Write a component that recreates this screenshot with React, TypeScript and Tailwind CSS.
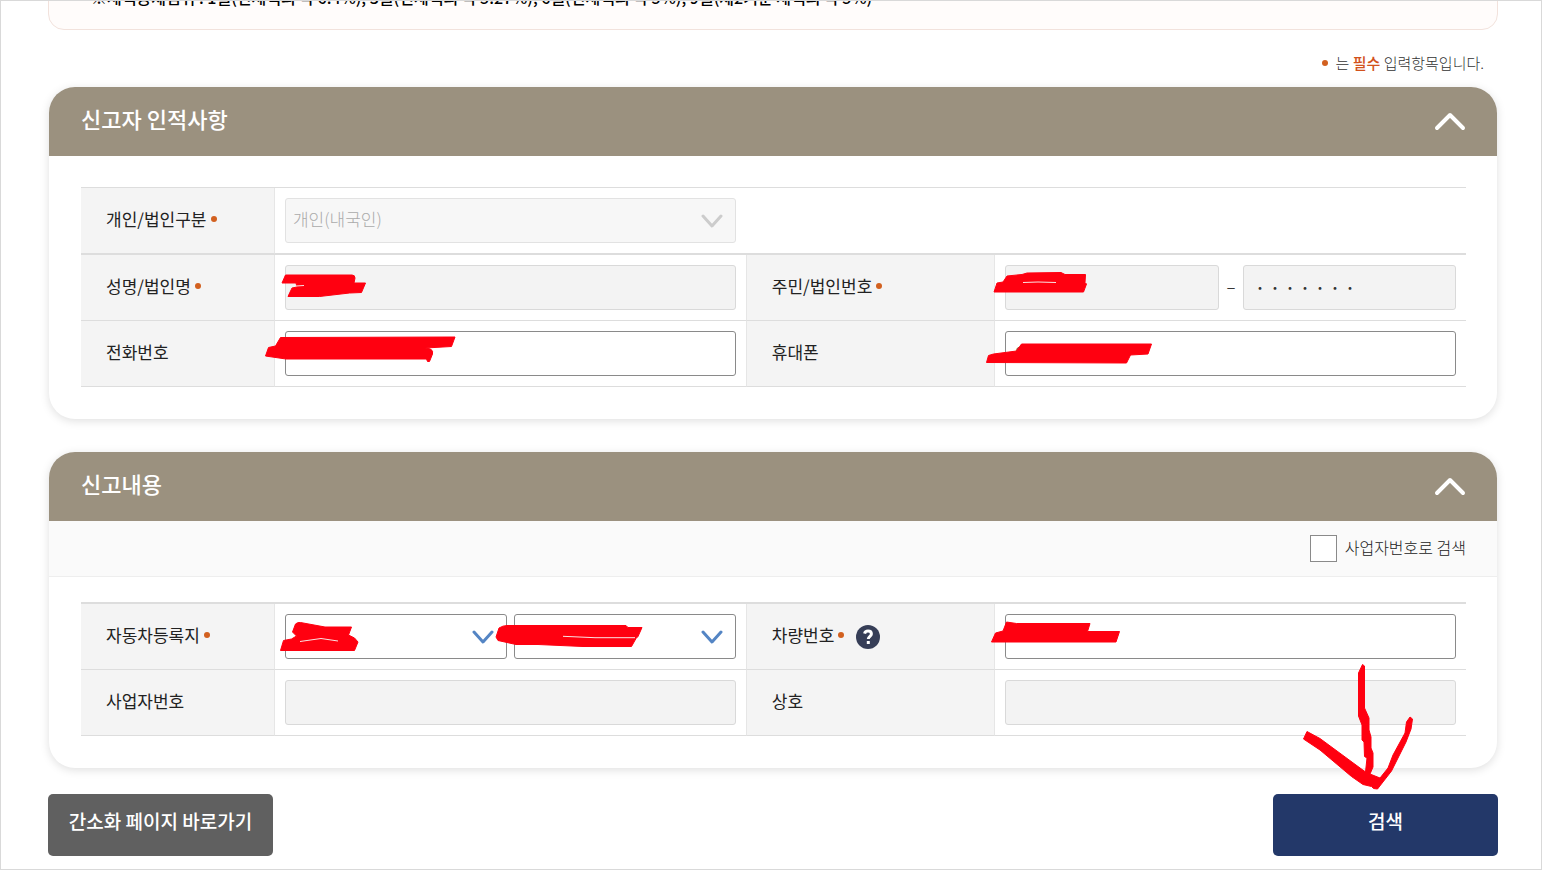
import {ReactNode, useState} from "react";
import clsx from "clsx";

const RequiredDot = () => (
    <span className="size-[6px] shrink-0 rounded-full bg-[#d2601f]" aria-hidden="true"/>
);

const Chevron = ({className, d, width, height, strokeWidth}: {
    className: string,
    d: string,
    width: number,
    height: number,
    strokeWidth: number
}) => (
    <svg className={className} width={width} height={height} viewBox={`0 0 ${width} ${height}`} fill="none"
         stroke="currentColor" strokeWidth={strokeWidth} strokeLinecap="round" strokeLinejoin="round"
         aria-hidden="true">
        <path d={d}/>
    </svg>
);

// red marker drawn over private values
const Marker = ({className, box, d, gaps}: { className: string, box: string, d: string, gaps?: string }) => {
    const [, , width, height] = box.split(" ").map(Number);
    return (
        <svg className={clsx("pointer-events-none absolute z-10 max-w-none", className)} width={width} height={height}
             viewBox={box} aria-hidden="true">
            <path d={d} fill="#ff0010" stroke="#ff0010" strokeWidth="1" strokeLinejoin="round"/>
            {gaps ? <path d={gaps} fill="none" stroke="#fbe3e3" strokeWidth="1"/> : null}
        </svg>
    );
};

const Section = ({title, children}: { title: string, children: ReactNode }) => {
    const [open, setOpen] = useState(true);

    return (
        <section className="mx-px overflow-hidden rounded-[26px] bg-white shadow-[0_2px_10px_rgba(0,0,0,0.13)]">
            <h2>
                <button
                    type="button"
                    className="flex h-[69px] w-full items-center justify-between bg-[#9b917f] pr-[31px] pl-8 text-[22px] leading-8 font-medium text-white"
                    aria-expanded={open}
                    onClick={() => setOpen(!open)}>
                    <span className="pb-2">{title}</span>
                    <Chevron className={open ? "" : "rotate-180"} width={32} height={20} strokeWidth={4}
                             d="M3 16 16 3l13 13"/>
                </button>
            </h2>
            {open ? children : null}
        </section>
    );
};

const FormTable = ({className, children}: { className?: string, children: ReactNode }) => (
    <table className={clsx("w-full table-fixed border-separate border-spacing-0 border-[#dddddd]", className)}>
        <colgroup>
            <col className="w-[14%]"/>
            <col className="w-[34%]"/>
            <col className="w-[18%]"/>
            <col className="w-[34%]"/>
        </colgroup>
        <tbody>{children}</tbody>
    </table>
);

const LabelCell = ({id, label, required, second, help}: {
    id: string,
    label: string,
    required?: boolean,
    second?: boolean,
    help?: boolean
}) => (
    <th scope="row"
        className={clsx("border-r border-b border-[#dddddd] border-r-[#e6e6e6] bg-[#f4f4f4] px-[25px] text-left font-normal", second && "border-l border-l-[#e6e6e6]")}>
        <div className="flex items-center">
            <div className="flex items-center gap-1 pb-1">
                <label htmlFor={id} className="text-[17px] leading-6 text-[#222222]">{label}</label>
                {required ? <RequiredDot/> : null}
            </div>
            {help
                ? <button type="button" aria-label="도움말"
                          className="ml-3 flex size-6 items-center justify-center rounded-full bg-[#363e57] text-white">
                    <svg width="24" height="24" viewBox="0 0 24 24" fill="none" stroke="currentColor"
                         strokeWidth="3" aria-hidden="true">
                        <path d="M8.6 8.6C9 6.8 10.3 6 12 6c2 0 3.4 1.1 3.4 2.9 0 2.3-3.1 2.5-3.1 5.1"/>
                        <path d="M12.3 16v3"/>
                    </svg>
                </button>
                : null}
        </div>
    </th>
);

const FieldCell = ({children}: { children: ReactNode }) => (
    <td className="border-b border-[#dddddd] p-[10px]">{children}</td>
);

const inputStyle = "block h-[45px] w-full rounded-[3px] border border-[#8a8a8a] bg-white px-[9px] font-light text-[#333333] read-only:border-[#d9d9d9] read-only:bg-[#f3f3f3]";
const selectStyle = "block h-[45px] w-full appearance-none rounded-[3px] border border-[#8a8a8a] bg-white px-[7px] pb-1 text-[17px] font-light text-[#333333] disabled:border-[#e2e2e2] disabled:bg-[#f7f7f7] disabled:text-[#aaaaaa] disabled:opacity-100";

const App = () => {
    return (
        <main
            className="min-h-screen overflow-hidden border border-[#d9d9d9] bg-white pr-[43px] pb-[13px] pl-[47px] font-['Noto_Sans_CJK_KR','Noto_Sans',sans-serif]">
            <div className="-mt-[19px] rounded-b-2xl border border-[#f2e2dc] bg-[#fffcfb] px-[42px] pb-[18px]">
                <p className="text-base leading-7 font-medium text-black">
                    ※세액공제범위 : 1월(연세액의 약 6.4%), 3월(연세액의 약 5.27%), 6월(연세액의 약 5%), 9월(제2기분 세액의 약 5%)
                </p>
            </div>

            <p className="flex items-center justify-end gap-2 pt-[23px] pr-[14px] pb-[14px] text-[15px] leading-5 font-light text-[#333333]">
                <RequiredDot/>
                <span>는 <strong className="font-medium text-[#d2521c]">필수</strong> 입력항목입니다.</span>
            </p>

            <form className="flex flex-col gap-[33px]" onSubmit={(e) => e.preventDefault()}>
                <Section title="신고자 인적사항">
                    <div className="pt-[31px] pr-[31px] pb-8 pl-8">
                        <FormTable className="border-t">
                            <tr>
                                <LabelCell id="kind" label="개인/법인구분" required/>
                                <FieldCell>
                                    <div className="relative">
                                        <select id="kind" className={selectStyle} disabled>
                                            <option>개인(내국인)</option>
                                        </select>
                                        <Chevron className="pointer-events-none absolute top-4 right-3 text-[#cccccc]"
                                                 width={24} height={16} strokeWidth={3} d="M3 2l9 10 9-10"/>
                                    </div>
                                </FieldCell>
                                <td colSpan={2} className="border-b border-[#dddddd]"/>
                            </tr>
                        </FormTable>
                        <FormTable className="border-t">
                            <tr>
                                <LabelCell id="name" label="성명/법인명" required/>
                                <FieldCell>
                                    <div className="relative">
                                        <input id="name" type="text" className={clsx(inputStyle, "text-[17px]")}
                                               readOnly/>
                                        <Marker className="top-[5px] -left-[5px]" box="280 270 90 30"
                                                d="M282 283l3.5-8H352q3 0 3 3l-1 5h11.5l-4 9.5-12 .5-30 3.5H288l4-8.5 5-1-1-4z"
                                                gaps="M296 286l8-.5"/>
                                    </div>
                                </FieldCell>
                                <LabelCell id="regNo" label="주민/법인번호" required second/>
                                <FieldCell>
                                    <div className="flex items-center gap-2">
                                        <div className="relative flex-1">
                                            <input id="regNo" type="text" className={clsx(inputStyle, "text-[17px]")}
                                                   readOnly/>
                                            <Marker className="top-[5px] -left-[15px]" box="990 270 100 26"
                                                    d="M994 292l3-9 6-1 4-6 15-1.5 5-1.5 34-.5 4 2h20.5l-.5 8 1.5 1.5-3 8z"
                                                    gaps="M1023 282.5l15-.5 18 .5"/>
                                        </div>
                                        <span className="w-2 pb-1 text-center text-[17px] leading-6 font-light">–</span>
                                        <div className="flex-1">
                                            <input type="text" aria-label="주민/법인번호 뒷자리" defaultValue="・・・・・・・"
                                                   className={clsx(inputStyle, "text-[15px]")} readOnly/>
                                        </div>
                                    </div>
                                </FieldCell>
                            </tr>
                            <tr>
                                <LabelCell id="phone" label="전화번호"/>
                                <FieldCell>
                                    <div className="relative">
                                        <input id="phone" type="tel" className={clsx(inputStyle, "text-[17px]")}/>
                                        <Marker className="-top-px -left-[25px]" box="260 330 200 36"
                                                d="M265.5 356l3-8.5 7-1.5 5-8.5 174.5-.5-3.5 9.5-26 1.5 5 1q3 2 2 5l-3 7.5h-2l-1-2.5H286z"/>
                                    </div>
                                </FieldCell>
                                <LabelCell id="mobile" label="휴대폰" second/>
                                <FieldCell>
                                    <div className="relative">
                                        <input id="mobile" type="tel" className={clsx(inputStyle, "pb-1 text-[17px]")}
                                               defaultValue="010"/>
                                        <Marker className="top-[9px] -left-[21px]" box="984 340 172 26"
                                                d="M986.5 362.5l2-7 5-1.5 23-3 5-7h130l-3.5 10-17.5 1-4 8z"/>
                                    </div>
                                </FieldCell>
                            </tr>
                        </FormTable>
                    </div>
                </Section>

                <Section title="신고내용">
                    <div className="flex h-14 items-center justify-end gap-2 border-b border-[#eeeeee] bg-[#fafafa] pr-[31px] pl-8">
                        <input id="byBizNo" type="checkbox"
                               className="size-[27px] appearance-none border border-[#8a8a8a] bg-white checked:bg-[#22386b]"/>
                        <label htmlFor="byBizNo" className="pb-1 text-base leading-6 font-light text-[#222222]">
                            사업자번호로 검색
                        </label>
                    </div>
                    <div className="pt-[25px] pr-[31px] pb-8 pl-8">
                        <FormTable className="border-t-2">
                            <tr>
                                <LabelCell id="city" label="자동차등록지" required/>
                                <FieldCell>
                                    <div className="flex gap-[7px]">
                                        <div className="relative flex-1">
                                            <select id="city" className={selectStyle}/>
                                            <Chevron
                                                className="pointer-events-none absolute top-4 right-3 text-[#5485c4]"
                                                width={24} height={16} strokeWidth={3} d="M3 2l9 10 9-10"/>
                                            <Marker className="top-[6px] -left-[7px]" box="278 620 84 34"
                                                    d="M280.5 650.5l3-10 8-1.5 5-3-4-4 3-8q2-2 5-1.5l24.5 4.5h26.5l-3 8 6 3 3.5 4-3.5 8.5z"
                                                    gaps="M300 641.5l21-3 17 2.5"/>
                                        </div>
                                        <div className="relative flex-1">
                                            <select aria-label="시/군/구" className={selectStyle}/>
                                            <Chevron
                                                className="pointer-events-none absolute top-4 right-3 text-[#5485c4]"
                                                width={24} height={16} strokeWidth={3} d="M3 2l9 10 9-10"/>
                                            <Marker className="top-2 -left-[23px]" box="490 622 156 28"
                                                    d="M495 637l3-9q4-2.5 8-2.5h119l2 2h14l-4 9-2 2-4.5 8h-48.5l-45-2h-22l-18-4z"
                                                    gaps="M562 636.3l32 1.4h40"/>
                                        </div>
                                    </div>
                                </FieldCell>
                                <LabelCell id="carNo" label="차량번호" required second help/>
                                <FieldCell>
                                    <div className="relative">
                                        <input id="carNo" type="text" className={clsx(inputStyle, "text-[17px]")}/>
                                        <Marker className="top-1 -left-[17px]" box="988 618 136 28"
                                                d="M991.5 642l4-9 7.5-2 3.5-9 10 1.5h73.5l-2.5 8h32l-3.5 10.5z"/>
                                    </div>
                                </FieldCell>
                            </tr>
                            <tr>
                                <LabelCell id="bizNo" label="사업자번호"/>
                                <FieldCell>
                                    <input id="bizNo" type="text" className={clsx(inputStyle, "text-[17px]")}
                                           readOnly/>
                                </FieldCell>
                                <LabelCell id="company" label="상호" second/>
                                <FieldCell>
                                    <input id="company" type="text" className={clsx(inputStyle, "text-[17px]")}
                                           readOnly/>
                                </FieldCell>
                            </tr>
                        </FormTable>
                    </div>
                </Section>

                <div className="-mt-[7px] flex justify-between text-[19px] leading-7 font-medium text-white">
                    <button type="button" className="h-[62px] w-[225px] rounded-[5px] bg-[#606060] pb-2">
                        간소화 페이지 바로가기
                    </button>
                    <div className="relative">
                        <button type="submit" className="h-[62px] w-[225px] rounded-[5px] bg-[#233869] pb-2">
                            검색
                        </button>
                        <Marker className="-top-[134px] left-[27px]" box="1300 660 120 132"
                                d="M1362.5 664.5L1364.5 666V708L1369 718V730L1371 737V748L1373 753V767L1370 774L1380 778L1388 768L1393 755L1405 733L1406.5 722L1410 717L1412.5 719L1411 729L1406 742L1391.5 771L1377.5 789L1373.5 788.5L1371.5 786.5L1363 784.5L1351.5 776.5L1320 750L1303.5 739L1307 731.5L1320 738.5L1365.5 772L1367 758L1364.5 756.5L1364 742L1362 740V725L1358.5 716V673Z"/>
                    </div>
                </div>
            </form>
        </main>
    );
};

export default App;
